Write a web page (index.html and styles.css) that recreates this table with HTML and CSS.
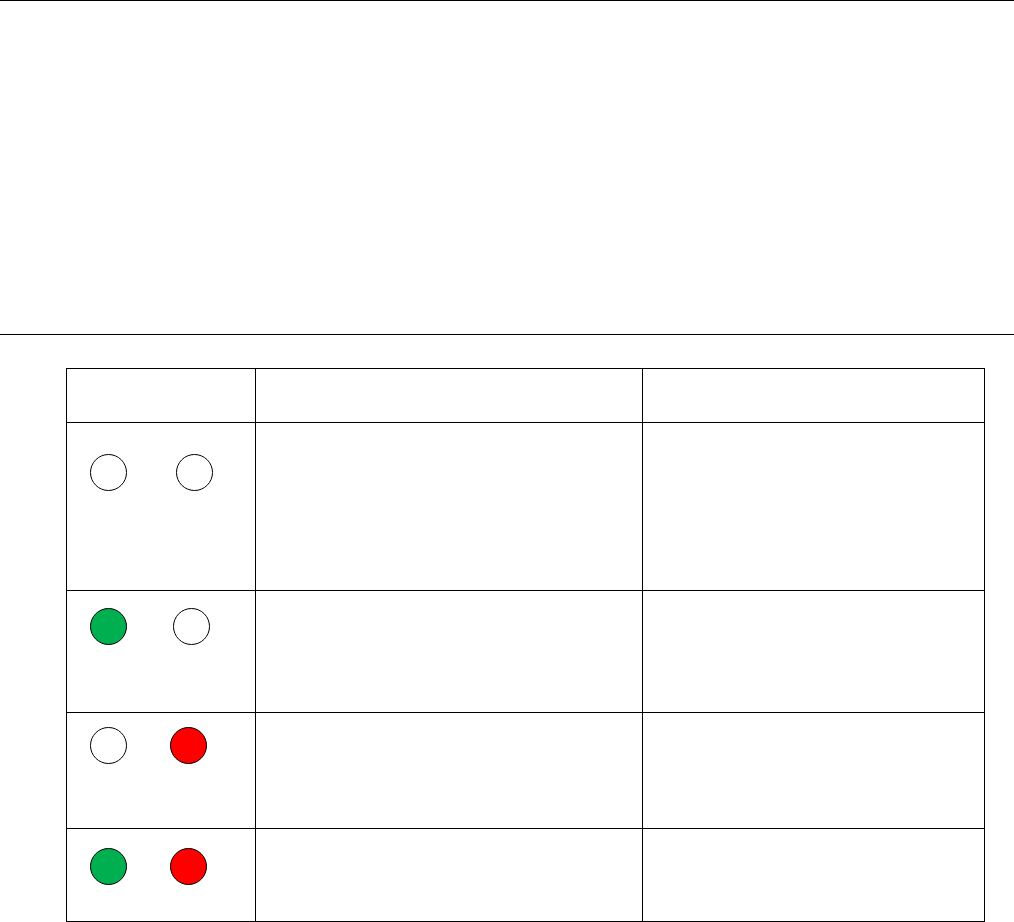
FILE: index.html
```html
<!DOCTYPE html>
<html lang="en">
<head>
<meta charset="utf-8">
<title>Indicator table</title>
<link rel="stylesheet" href="styles.css">
</head>
<body>
<div class="header-band"></div>
<div class="grid">
  <div class="cell head"></div>
  <div class="cell head"></div>
  <div class="cell head"></div>

  <div class="cell r1 lamps"><span class="dot off"></span><span class="dot off g1"></span></div>
  <div class="cell r1"></div>
  <div class="cell r1"></div>

  <div class="cell r2 lamps"><span class="dot green"></span><span class="dot off g2"></span></div>
  <div class="cell r2"></div>
  <div class="cell r2"></div>

  <div class="cell r3 lamps"><span class="dot off"></span><span class="dot red g3"></span></div>
  <div class="cell r3"></div>
  <div class="cell r3"></div>

  <div class="cell r4 lamps"><span class="dot green"></span><span class="dot red g3"></span></div>
  <div class="cell r4"></div>
  <div class="cell r4"></div>
</div>
</body>
</html>
```
FILE: styles.css
```css
html, body {
  margin: 0;
  padding: 0;
  background: #fff;
  font-family: "Liberation Sans", Arial, sans-serif;
}

.header-band {
  height: 333px;
  border-top: 1px solid #000;
  border-bottom: 1px solid #000;
}

.grid {
  display: grid;
  grid-template-columns: 189px 387px 342px;
  grid-template-rows: 54px 168px 122px 116px 93px;
  margin: 33px 0 0 66px;
  width: max-content;
  border-left: 1px solid #000;
  border-top: 1px solid #000;
}

.cell {
  box-sizing: content-box;
  border-right: 1px solid #000;
  border-bottom: 1px solid #000;
}

.lamps {
  display: flex;
  align-items: flex-start;
  padding-left: 23px;
}

.r1.lamps { padding-top: 31px; }
.r2.lamps { padding-top: 17px; }
.r3.lamps { padding-top: 14px; }
.r4.lamps { padding-top: 19px; }

.lamps { box-sizing: border-box; border-right: 1px solid #000; }

.dot {
  display: block;
  width: 37px;
  height: 37px;
  box-sizing: border-box;
  border: 1.5px solid #000;
  border-radius: 50%;
  background: #fff;
  flex: none;
}

.dot.green { background: #00b050; }
.dot.red { background: #ff0000; }

.g1 { margin-left: 49px; }
.g2 { margin-left: 46px; }
.g3 { margin-left: 43px; }
```
